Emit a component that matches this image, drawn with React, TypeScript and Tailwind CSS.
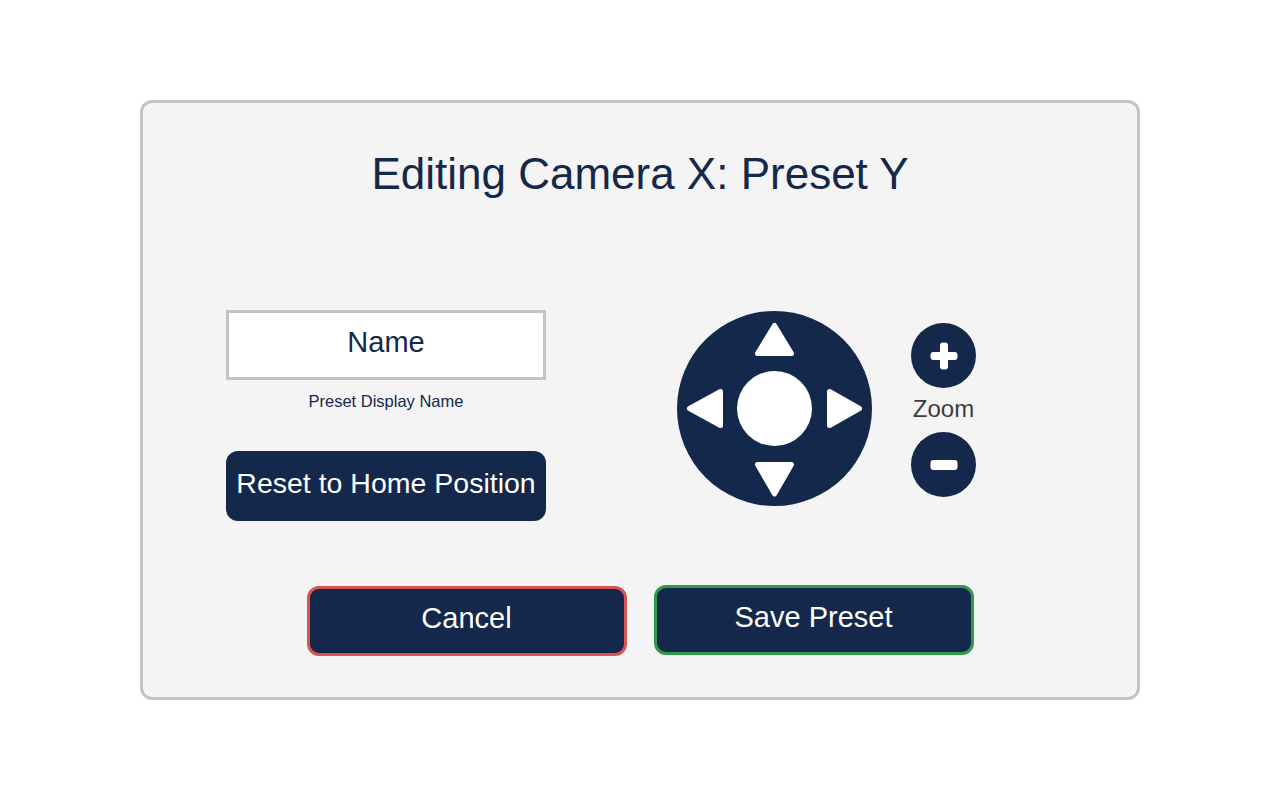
import React from 'react';

const FONT = "font-['Liberation_Sans',Arial,sans-serif]";

// ─── Pan/tilt pad ─────────────────────────────────────────────────────────────
function PanTiltPad() {
  return (
    <svg width="195" height="195" viewBox="0 0 195 195" className="shrink-0">
      <circle cx="97.5" cy="97.5" r="97.5" fill="#13284a" />
      <circle cx="97.5" cy="97.5" r="37.5" fill="#ffffff" />
      <g fill="#ffffff" stroke="#ffffff" strokeWidth="5" strokeLinejoin="round">
        {/* up */}
        <polygon points="97.5,14.5 80.5,42.5 114.5,42.5" />
        {/* down */}
        <polygon points="80.5,153.5 114.5,153.5 97.5,183" />
        {/* left */}
        <polygon points="12.5,97.5 43.5,80.5 43.5,114.5" />
        {/* right */}
        <polygon points="152.5,80.5 152.5,114.5 182.5,97.5" />
      </g>
    </svg>
  );
}

function ZoomButton({ kind }: { kind: 'in' | 'out' }) {
  return (
    <button className="w-[65px] h-[65px] rounded-full bg-[#13284a] flex items-center justify-center">
      <svg width="28" height="28" viewBox="0 0 28 28">
        {kind === 'in' ? (
          <g fill="#ffffff">
            <rect x="0.5" y="10" width="27" height="8" rx="3" />
            <rect x="10" y="0.5" width="8" height="27" rx="3" />
          </g>
        ) : (
          <rect x="0.5" y="9" width="27" height="10" rx="3" fill="#ffffff" />
        )}
      </svg>
    </button>
  );
}

export default function App() {
  return (
    <div className={`w-full h-screen bg-white flex items-center justify-center pr-px ${FONT}`}>
      <div className="w-[1000px] h-[600px] bg-[#f4f4f4] border-[3px] border-[#c4c4c4] rounded-[12px] flex flex-col items-center">
        {/* Title */}
        <h1 className="mt-[49px] text-[44px] leading-none text-[#13284a]">
          Editing Camera X: Preset Y
        </h1>

        {/* Controls row */}
        <div className="w-full mt-[114px] pl-[83px] flex items-start">
          <div className="w-[320px] flex flex-col items-center">
            <div className="w-[320px] h-[70px] bg-white border-[3px] border-[#c4c4c4] flex items-center justify-center pb-[5px]">
              <span className="text-[29px] leading-none text-[#13284a]">Name</span>
            </div>
            <span className="mt-[13px] h-[16px] text-[16.5px] leading-[16px] text-[#13284a]">Preset Display Name</span>
            <button className="mt-[42px] w-[320px] h-[70px] rounded-[12px] bg-[#13284a] flex items-center justify-center pb-[6px]">
              <span className="text-[28.5px] leading-none text-white">Reset to Home Position</span>
            </button>
          </div>

          <div className="ml-[131px] mt-px">
            <PanTiltPad />
          </div>

          <div className="ml-[39px] mt-[13px] flex flex-col items-center">
            <ZoomButton kind="in" />
            <span className="mt-[9px] text-[24px] leading-none text-[#3d3d3d]">Zoom</span>
            <div className="mt-[11px]">
              <ZoomButton kind="out" />
            </div>
          </div>
        </div>

        {/* Footer buttons */}
        <div className="mt-[65px] flex items-start gap-[27px]">
          <button className="w-[320px] h-[70px] rounded-[12px] bg-[#13284a] border-[3px] border-[#d9534f] flex items-center justify-center pb-[5px]">
            <span className="text-[29px] leading-none text-white">Cancel</span>
          </button>
          <button className="-mt-px w-[320px] h-[70px] rounded-[12px] bg-[#13284a] border-[3px] border-[#2f9a48] flex items-center justify-center pb-[5px]">
            <span className="text-[29px] leading-none text-white">Save Preset</span>
          </button>
        </div>
      </div>
    </div>
  );
}
